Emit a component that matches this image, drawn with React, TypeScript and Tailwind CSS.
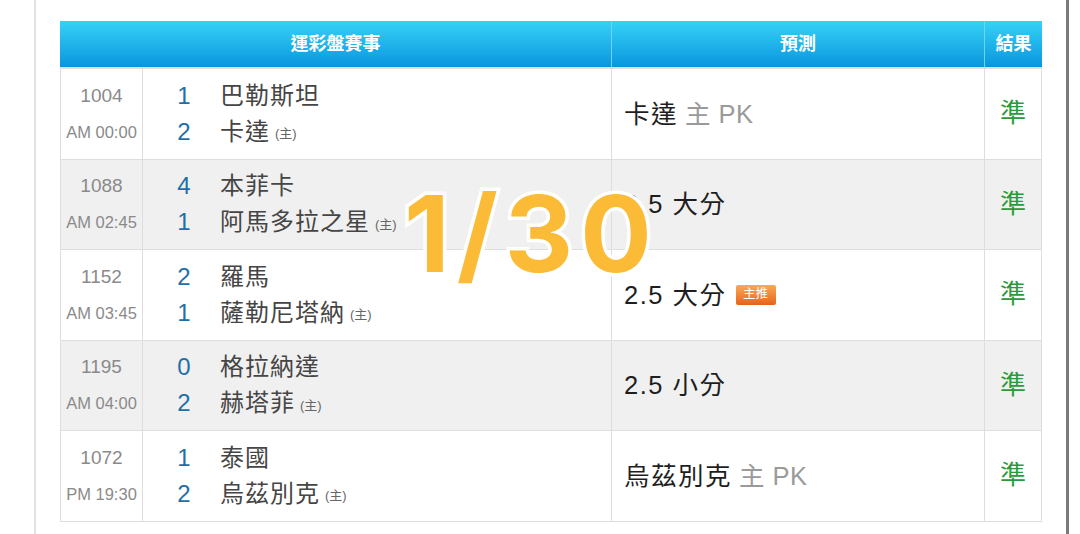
import React from "react";

type Row = {
  id: string;
  time: string;
  home: [string, string];
  away: [string, string];
  pick: string;
  tag?: string;
  badge?: boolean;
};

const rows: Row[] = [
  { id: "1004", time: "AM 00:00", home: ["1", "巴勒斯坦"], away: ["2", "卡達"], pick: "卡達", tag: "主 PK" },
  { id: "1088", time: "AM 02:45", home: ["4", "本菲卡"], away: ["1", "阿馬多拉之星"], pick: "2.5 大分" },
  { id: "1152", time: "AM 03:45", home: ["2", "羅馬"], away: ["1", "薩勒尼塔納"], pick: "2.5 大分", badge: true },
  { id: "1195", time: "AM 04:00", home: ["0", "格拉納達"], away: ["2", "赫塔菲"], pick: "2.5 小分" },
  { id: "1072", time: "PM 19:30", home: ["1", "泰國"], away: ["2", "烏茲別克"], pick: "烏茲別克", tag: "主 PK" },
];

const font = "font-['Liberation_Sans','Noto_Sans_CJK_TC',sans-serif]";

export default function App() {
  return (
    <div className={`relative w-[1080px] h-[534px] bg-white overflow-hidden ${font}`}>
      <div className="ml-[34px] w-[1035px] h-full border-l-2 border-[#e2e2e2] border-r-[3px] border-r-[#7a7a7a] pl-[24px] pt-[21px]">
        <div className="w-[982px] grid grid-cols-[83px_469px_373px_57px] border-b border-[#dcdcdc]">
          {/* Header */}
          <div className="col-span-2 h-[47px] flex items-center justify-center text-white font-bold text-[18px] bg-gradient-to-b from-[#35d2f6] to-[#0796de] border-r border-[#6fd3f3] border-b border-b-[#bfeafa]">
            運彩盤賽事
          </div>
          <div className="h-[47px] flex items-center justify-center text-white font-bold text-[18px] bg-gradient-to-b from-[#35d2f6] to-[#0796de] border-r border-[#6fd3f3] border-b border-b-[#bfeafa]">
            預測
          </div>
          <div className="h-[47px] flex items-center justify-center text-white font-bold text-[18px] bg-gradient-to-b from-[#35d2f6] to-[#0796de] border-b border-b-[#bfeafa]">
            結果
          </div>

          {rows.map((r, i) => {
            const bg = i % 2 === 1 ? "bg-[#f0f0f0]" : "bg-white";
            const cell = `${bg} h-[90.5px] border-t border-[#dedede] first:border-t-0`;
            return (
              <React.Fragment key={r.id}>
                <div className={`${cell} border-l border-r border-[#dedede] flex flex-col items-center justify-center text-[#8a8a8a]`}>
                  <div className="h-[36px] leading-[36px] text-[19px]">{r.id}</div>
                  <div className="h-[36px] leading-[36px] text-[16.5px]">{r.time}</div>
                </div>
                <div className={`${cell} border-r border-[#dedede] flex flex-col justify-center pl-[30px]`}>
                  {[r.home, r.away].map(([score, name], k) => (
                    <div key={k} className="h-[36px] flex items-center">
                      <span className="w-[22px] text-center text-[24px] text-[#1f6fa6]">{score}</span>
                      <span className="ml-[25px] text-[24px] text-[#454545] tracking-[1px]">{name}</span>
                      {k === 1 && <span className="ml-[5px] mt-[4px] text-[13px] text-[#666]">(主)</span>}
                    </div>
                  ))}
                </div>
                <div className={`${cell} border-r border-[#dedede] flex items-center pl-[12px]`}>
                  <span className="text-[25.5px] text-[#1e1e1e] tracking-[1.5px]">{r.pick}</span>
                  {r.tag && <span className="ml-[7px] text-[25.5px] text-[#9a9a9a] tracking-[0.5px]">{r.tag}</span>}
                  {r.badge && (
                    <span className="ml-[9px] w-[40px] h-[20px] rounded-[2px] bg-gradient-to-b from-[#f9a953] to-[#e5631a] text-white text-[12.5px] flex items-center justify-center">
                      主推
                    </span>
                  )}
                </div>
                <div className={`${cell} border-r border-[#dedede] flex items-center justify-center text-[26px] text-[#2c9a3c]`}>
                  準
                </div>
              </React.Fragment>
            );
          })}
        </div>
      </div>

      {/* Page counter overlay */}
      <div className="absolute left-[404px] top-[181px] font-['Inter',sans-serif] font-bold text-[106px] tracking-[7px] leading-none text-[#fbbb36] [-webkit-text-stroke:7px_white] [paint-order:stroke_fill]">
        1/30
      </div>
    </div>
  );
}
